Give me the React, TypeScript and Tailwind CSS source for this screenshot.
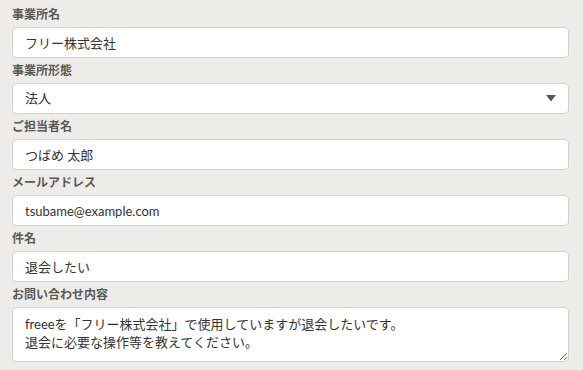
import React from "react";

function Label({ children }: { children: React.ReactNode }) {
  return (
    <div className="pt-[4px] pb-[3px] text-[12px] leading-[18px] font-bold text-[#595959]">{children}</div>
  );
}

function TextBox({ value }: { value: string }) {
  return (
    <input
      readOnly
      defaultValue={value}
      className="block w-full h-[31px] rounded-[4px] border border-[#d4d2ce] bg-white px-[12px] text-[13px] text-[#333333] outline-none font-['Lato','Noto_Sans_CJK_JP',sans-serif]"
    />
  );
}

export default function App() {
  return (
    <div className="w-[583px] h-[370px] bg-[#eeece8] pl-[12px] pr-[14px] pt-[2px] overflow-hidden font-['Lato','Noto_Sans_CJK_JP',sans-serif]">
      <Label>事業所名</Label>
      <TextBox value="フリー株式会社" />
      <Label>事業所形態</Label>
      <div className="flex items-center justify-between h-[31px] rounded-[4px] border border-[#d4d2ce] bg-white pl-[12px] pr-[12px] text-[13px] text-[#333333]">
        <span>法人</span>
        <svg width="10" height="7" viewBox="0 0 10 7">
          <polygon points="0,0 10,0 5,6.5" fill="#555555" />
        </svg>
      </div>
      <Label>ご担当者名</Label>
      <TextBox value="つばめ 太郎" />
      <Label>メールアドレス</Label>
      <TextBox value="tsubame@example.com" />
      <Label>件名</Label>
      <TextBox value="退会したい" />
      <Label>お問い合わせ内容</Label>
      <textarea
        readOnly
        defaultValue={"freeeを「フリー株式会社」で使用していますが退会したいです。\n退会に必要な操作等を教えてください。"}
        className="block w-full h-[55px] rounded-[4px] border border-[#d4d2ce] bg-white px-[12px] py-[7px] text-[13px] leading-[18px] text-[#333333] outline-none font-['Lato','Noto_Sans_CJK_JP',sans-serif]"
      />
    </div>
  );
}
